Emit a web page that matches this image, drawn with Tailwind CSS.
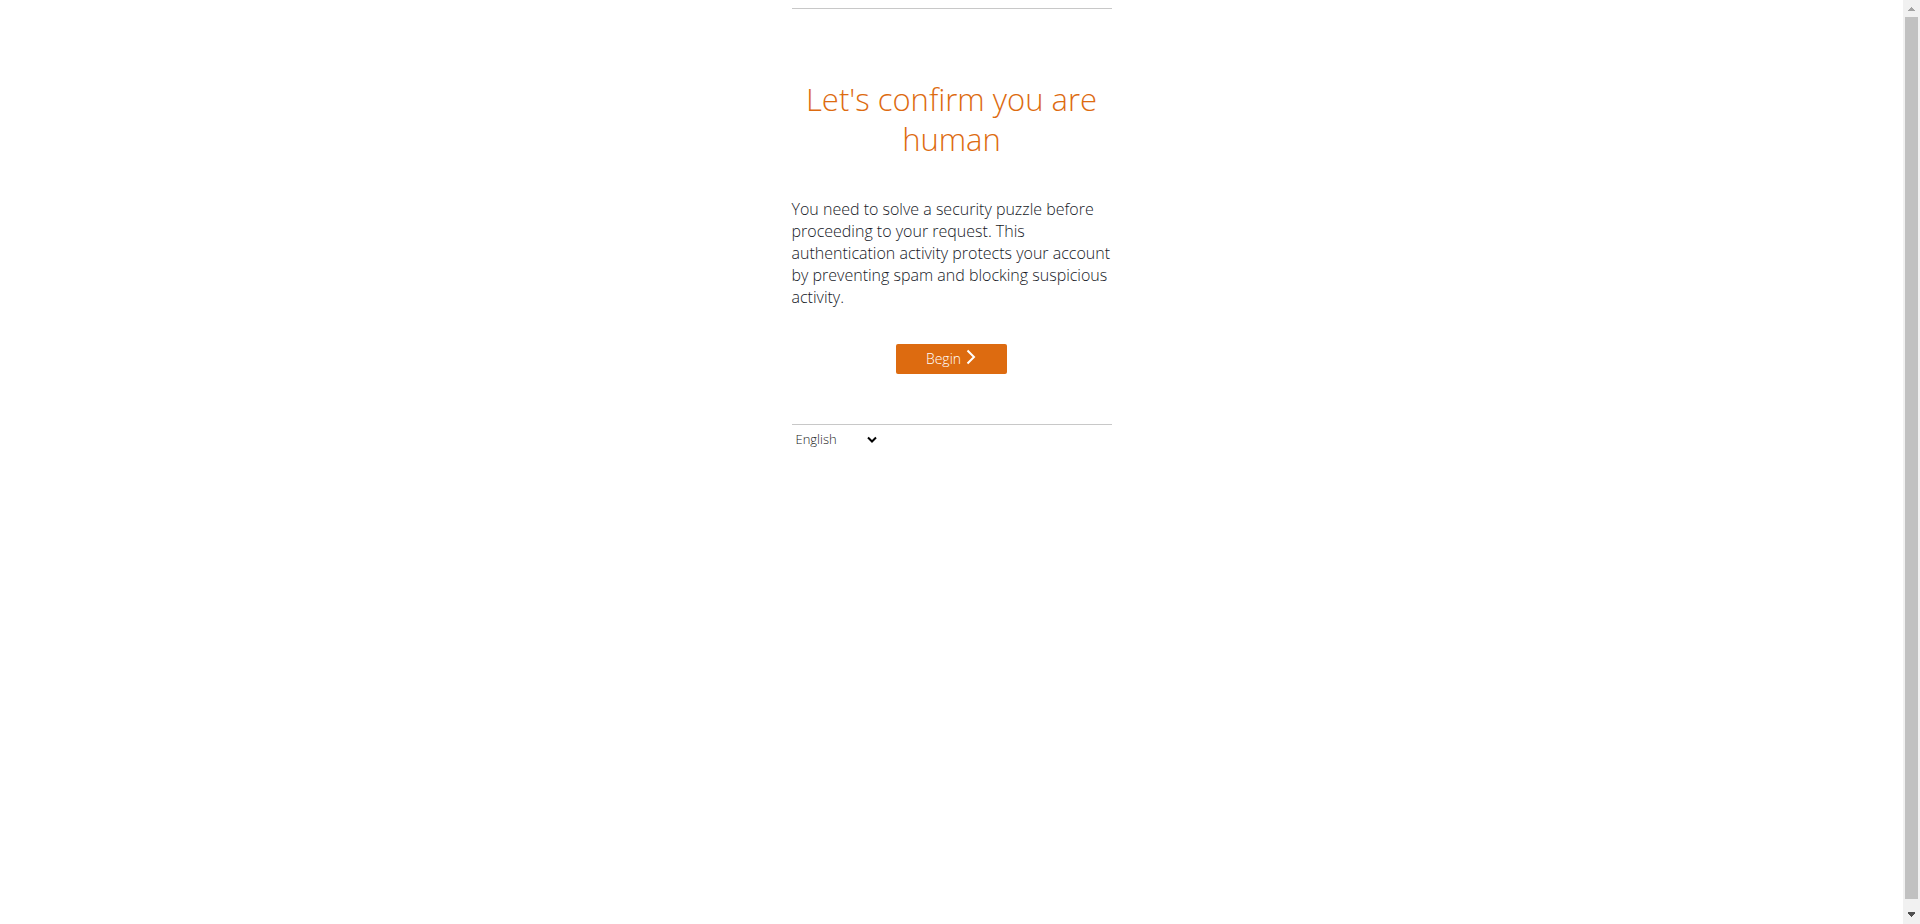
<!DOCTYPE html>
<html lang="en">
<head>
<meta charset="utf-8">
<title>Human verification</title>
<script src="https://cdn.jsdelivr.net/npm/@tailwindcss/browser@4"></script>
</head>
<body class="flex h-screen overflow-hidden bg-white font-['Open_Sans','Noto_Sans',sans-serif] font-light">
<div class="flex-1 pt-2">
  <div class="mx-auto max-w-80">
    <main class="flex flex-col items-center border-y border-[#c8c8c8] pt-[70px] pb-[50px]">
      <h1 class="text-center text-[31px] leading-10 font-light text-[#dd6b10]">Let's confirm you are<br>human</h1>
      <p class="mt-[39px] w-full text-base leading-[22px] whitespace-nowrap text-[#16191f]">You need to solve a security puzzle before<br>proceeding to your request. This<br>authentication activity protects your account<br>by preventing spam and blocking suspicious<br>activity.</p>
      <button type="button" class="mt-9 flex h-[30px] w-[111px] items-center justify-center gap-1 rounded-xs bg-[#dd6b10] text-sm text-white">
        Begin
        <svg class="mb-1 h-4 w-3" viewBox="0 0 12 16" fill="none" stroke="currentColor" stroke-width="2" aria-hidden="true"><path d="M2.500 1.500 9 8l-6.500 6.500"/></svg>
      </button>
    </main>
    <div class="grid w-[90px] items-center pt-1">
      <select id="language" aria-label="Language" class="col-start-1 row-start-1 h-[22px] appearance-none bg-transparent pl-1 text-[13px] text-[#222222]"><option>English</option></select>
      <svg class="pointer-events-none col-start-1 row-start-1 mr-1 h-2 w-3 justify-self-end" viewBox="0 0 12 8" fill="none" stroke="#000000" stroke-width="2" aria-hidden="true"><path d="m2 1.500 4 4 4-4"/></svg>
    </div>
  </div>
</div>
<div class="flex w-[17px] flex-col items-center bg-[#f1f1f1]" aria-hidden="true">
  <svg class="h-[17px] w-[17px]" viewBox="0 0 17 17" shape-rendering="crispEdges" fill="#a3a3a3"><path d="M5 11V10h1V9h1V8h1V7h1v1h1v1h1v1h1v1z"/></svg>
  <div class="w-[13px] flex-1 bg-[#c1c1c1]"></div>
  <svg class="mt-2 h-[17px] w-[17px]" viewBox="0 0 17 17" shape-rendering="crispEdges" fill="#505050"><path d="M5 5v2h1v1h1v1h1v1h1V9h1V8h1V7h1V5z"/></svg>
</div>
</body>
</html>
